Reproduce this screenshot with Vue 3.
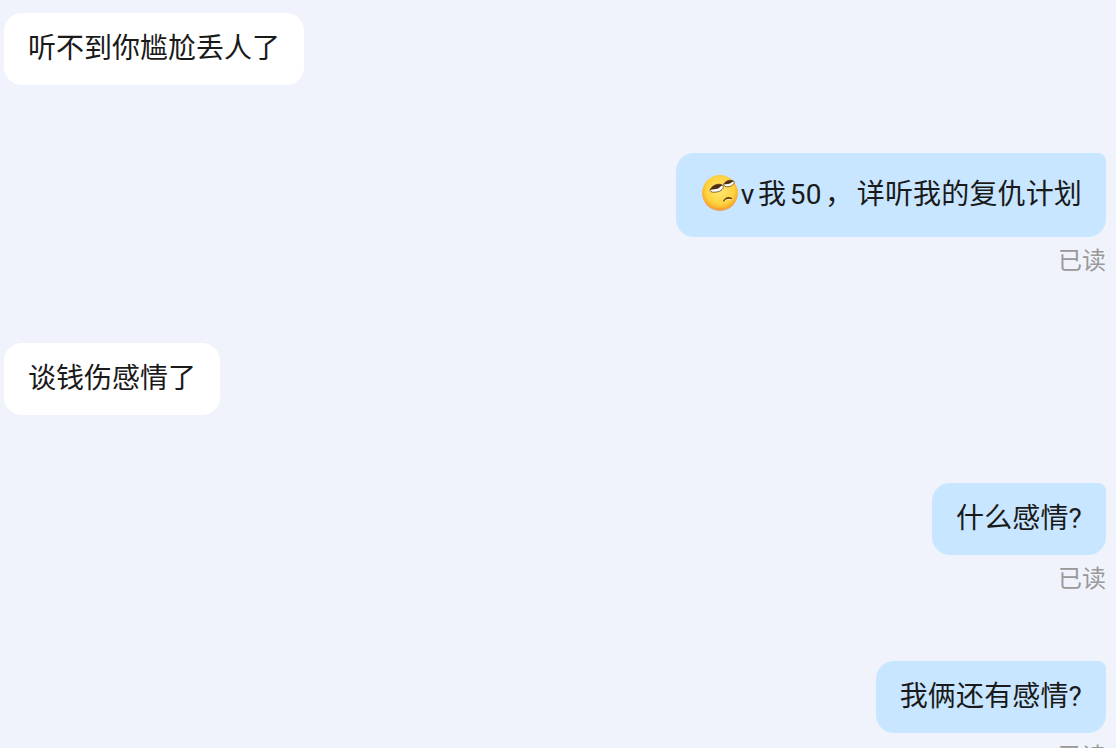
<template>
  <div class="chat">
    <div v-for="(msg, i) in messages" :key="i" class="row" :class="msg.mine ? 'mine' : 'other'">
      <div class="bubble">
        <svg v-if="msg.emoji" class="emoji" viewBox="0 0 36 36">
          <defs>
            <radialGradient id="face" cx="50%" cy="42%" r="58%">
              <stop offset="0%" stop-color="#ffe873" />
              <stop offset="68%" stop-color="#ffd23f" />
              <stop offset="90%" stop-color="#f8ab2c" />
              <stop offset="100%" stop-color="#ea9463" />
            </radialGradient>
          </defs>
          <circle cx="18" cy="18" r="17.9" fill="url(#face)" />
          <path d="M8 15.5 C9.5 10 17 7.5 21 10.5 C22.5 13.5 19 16.5 14.5 17 C11.5 17.4 9 17.5 8 15.5 Z" fill="#fff" stroke="#6b3d14" stroke-width="0.8" />
          <path d="M8 15.5 C9.5 10 17 7.5 21 10.5 C18.5 10.2 17.8 13.8 14 14 C11.5 14.1 9.5 14.5 8 15.5 Z" fill="#4f2c0e" />
          <path d="M21.5 9.5 C23.5 5.5 29 4 32 6.5 C33 9 29.5 11.5 26 11.8 C23.5 12 22 11 21.5 9.5 Z" fill="#fff" stroke="#6b3d14" stroke-width="0.8" />
          <path d="M21.5 9.5 C23.5 5.5 29 4 32 6.5 C29.8 6.3 29 8.8 26 9 C24.3 9.1 22.8 9.2 21.5 9.5 Z" fill="#4f2c0e" />
          <path d="M21 26 C22.5 22.5 26.5 20.5 30 23 C30.5 23.8 29.8 24.3 29 24 C26.5 23.5 24 24.5 22 26.3 C21.5 26.7 20.9 26.5 21 26 Z" fill="#6b3d14" />
          <path d="M23.5 25.2 C25 24.4 26.8 24.2 28.2 24.8" fill="none" stroke="#fff3c0" stroke-width="0.9" stroke-linecap="round" />
        </svg>
        <span>{{ msg.text }}</span>
      </div>
      <div v-if="msg.mine" class="read">已读</div>
    </div>
  </div>
</template>

<script setup>
const messages = [
  { text: '听不到你尴尬丢人了', mine: false },
  { text: 'v 我 50 ， 详听我的复仇计划', mine: true, emoji: true },
  { text: '谈钱伤感情了', mine: false },
  { text: '什么感情?', mine: true },
  { text: '我俩还有感情?', mine: true },
];
</script>

<style>
html,
body {
  margin: 0;
  height: 100%;
  overflow: hidden;
  background: #f0f3fb;
}
</style>

<style scoped>
.chat {
  display: flex;
  flex-direction: column;
  gap: 68px;
  padding: 13px 10px 0 4px;
  font-family: Roboto, "Noto Sans CJK SC", sans-serif;
}

.row {
  display: flex;
  flex-direction: column;
}

.mine {
  align-items: flex-end;
}

.other {
  align-items: flex-start;
}

.bubble {
  display: flex;
  align-items: center;
  padding: 18px 24px;
  font-size: 28px;
  line-height: 36px;
  white-space: nowrap;
  color: #1a1a1a;
  background: #fff;
  border-radius: 18px;
}

.mine .bubble {
  background: #c8e6ff;
  border-top-right-radius: 8px;
  letter-spacing: 0.15px;
  word-spacing: -3.55px;
}

.emoji {
  flex: none;
  width: 36px;
  height: 36px;
  margin: 4px 3px 8px 2px;
}

.read {
  margin-top: 10px;
  font-size: 24px;
  line-height: 28px;
  color: #999;
}
</style>
